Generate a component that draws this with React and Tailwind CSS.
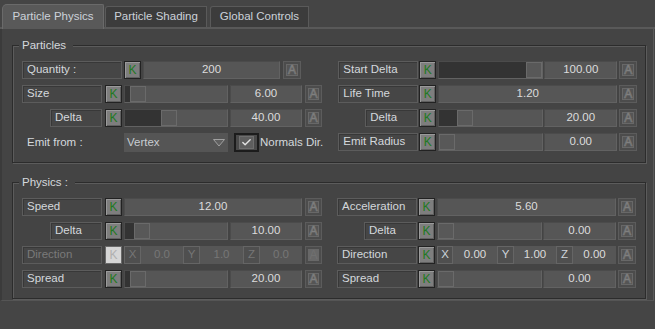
import React from 'react';
import { Check } from 'lucide-react';

// column metrics for the two halves of a group box
const LEFT = {
    g1: 'ml-[3px]', g2: 'ml-[2px]', g3: 'ml-[2px]', g4: 'ml-[3px]',
    slider: 'w-[104px]', value: 'w-[72px]', full: 'w-[178px]', a: 'w-[17px]',
    indent: 'ml-[28px] w-[52px]',
    xyz: ['w-[17px]', 'w-[42px]', 'w-[17px]', 'w-[43px]', 'w-[17px]', 'w-[42px]'],
};
const RIGHT = {
    g1: 'ml-[1px]', g2: 'ml-[2px]', g3: 'ml-[1px]', g4: 'ml-[2px]',
    slider: 'w-[105px]', value: 'w-[73px]', full: 'w-[179px]', a: 'w-[18px]',
    indent: 'ml-[27px] w-[53px]',
    xyz: ['w-[16px]', 'w-[44px]', 'w-[17px]', 'w-[42px]', 'w-[17px]', 'w-[43px]'],
};

const field = 'h-full flex items-center justify-center bg-[#565656] border border-[#4b4b4b] border-r-[#626262] border-b-[#626262] text-[#dcdcdc]';

const KBtn = ({ className = '', disabled }) => (
    <div
        className={`${className} w-[17px] h-full flex items-center justify-center border ${
            disabled
                ? 'border-[#6a6a6a] bg-[#d6d6d6] text-[#b0b0b0]'
                : 'border-[#222] bg-[#7e7e7e] shadow-[inset_1px_1px_0_#9a9a9a,inset_-1px_-1px_0_#606060] text-[#1f7a1f]'
        } text-[12px] leading-none`}
    >
        K
    </div>
);

const ABtn = ({ className = '', w, disabled }) => (
    <div className={`${className} ${w} h-full p-[2px] border border-[#5c5c5c] bg-[#4c4c4c]`}>
        <div
            className={`w-full h-full flex items-center justify-center border border-[#686868] ${
                disabled ? 'bg-[#686868] text-[#707070]' : 'bg-[#555] text-[#555] [-webkit-text-stroke:0.7px_#808080]'
            } text-[12px] leading-none`}
        >
            A
        </div>
    </div>
);

const Label = ({ text, w, disabled }) => (
    <div
        className={`${w} h-full flex items-center pl-[4px] bg-[#464646] border border-[#5c5c5c] shadow-[inset_1px_1px_0_#383838] ${
            disabled ? 'text-[#7a7a7a]' : 'text-[#d4d8dc]'
        }`}
    >
        {text}
    </div>
);

const Slider = ({ s, dark, value }) => (
    <>
        <div className={`${s.g2} ${s.slider} h-full flex bg-[#565656] border border-[#4b4b4b] border-r-[#626262] border-b-[#626262]`}>
            <div className="h-full bg-[#333]" style={{ width: dark }} />
            <div className="w-[16px] h-full border border-[#6a6a6a] bg-[#585858]" />
        </div>
        <div className={`${s.g3} ${s.value} ${field}`}>{value}</div>
    </>
);

const Row = ({ s, label, indent, disabled, children }) => (
    <div className="flex h-[18px]">
        <Label text={label} w={indent ? s.indent : 'w-[80px]'} disabled={disabled} />
        <KBtn className={s.g1} disabled={disabled} />
        {children}
        <ABtn className={s.g4} w={s.a} disabled={disabled} />
    </div>
);

const Xyz = ({ s, values, disabled }) => {
    const box = `h-full flex items-center justify-center bg-[#4f4f4f] border border-[#656565] ${disabled ? 'text-[#767676]' : 'text-[#cdd3da]'}`;
    const val = `h-full flex items-center justify-center bg-[#565656] ${disabled ? 'text-[#767676]' : 'text-[#dcdcdc]'}`;
    return (
        <div className={`${s.g2} ${s.full} h-full flex`}>
            <div className={`${s.xyz[0]} ${box}`}>X</div>
            <div className={`${s.xyz[1]} ${val}`}>{values[0]}</div>
            <div className={`${s.xyz[2]} ${box}`}>Y</div>
            <div className={`${s.xyz[3]} ${val}`}>{values[1]}</div>
            <div className={`${s.xyz[4]} ${box}`}>Z</div>
            <div className={`${s.xyz[5]} ${val}`}>{values[2]}</div>
        </div>
    );
};

const Group = ({ title, titleW, className = '', children }) => (
    <div className={`${className} relative w-[634px] border border-[#2c2c2c] shadow-[inset_1px_1px_0_#5c5c5c,1px_1px_0_#5c5c5c] pt-[15px] pb-[10px] pl-[9px]`}>
        <span className={`absolute -top-[8px] left-[6px] ${titleW} px-[3px] leading-[14px] bg-[#444] text-[#d4d8dc]`}>{title}</span>
        <div className="flex gap-[15px]">{children}</div>
    </div>
);

const Tab = ({ children, active, w, className = '' }) => (
    <div
        className={`${className} ${w} flex items-center justify-center text-[#ccd2d9] ${
            active
                ? 'h-[25px] bg-[#595959] border-t border-l border-r border-[#6a6a6a] rounded-tl-[5px] rounded-tr-[2px]'
                : 'h-[21px] mb-[2px] bg-[#3c3c3c] border-t border-l border-r border-[#5a5a5a] rounded-tl-[3px]'
        }`}
    >
        {children}
    </div>
);

export default function App() {
    return (
        <div className="w-[655px] h-[329px] overflow-hidden bg-[#454545] font-['Liberation_Sans',Arial,sans-serif] text-[11.5px] text-[#d4d8dc]">
            {/* Tabs */}
            <div className="flex items-end h-[29px] pl-[2px] bg-[linear-gradient(to_top,#595959_2px,transparent_2px)]">
                <Tab active w="w-[102px]">Particle Physics</Tab>
                <Tab w="w-[102px]" className="ml-[1px]">Particle Shading</Tab>
                <Tab w="w-[99px]" className="ml-[3px]">Global Controls</Tab>
            </div>

            {/* Rollout panel */}
            <div className="w-[654px] h-[272px] bg-[#444] border-l-[2px] border-l-[#3b3b3b] border-r border-r-[#5a5a5a] border-b border-b-[#555] pl-[10px] pt-[16px]">
                <Group title="Particles" titleW="w-[54px]">
                    <div className="flex flex-col gap-[6px]">
                        <div className="flex h-[18px]">
                            <Label text="Quantity :" w="w-[100px]" />
                            <KBtn className="ml-[2px]" />
                            <div className={`ml-[2px] w-[137px] ${field}`}>200</div>
                            <ABtn className="ml-[3px]" w="w-[18px]" />
                        </div>
                        <Row s={LEFT} label="Size">
                            <Slider s={LEFT} dark={5} value="6.00" />
                        </Row>
                        <Row s={LEFT} label="Delta" indent>
                            <Slider s={LEFT} dark={36} value="40.00" />
                        </Row>
                        <div className="flex items-center h-[19px]">
                            <span className="w-[102px] pl-[5px] text-[#d4d8dc]">Emit from :</span>
                            <div className="w-[104px] h-full flex items-center justify-between pl-[3px] pr-[3px] bg-[#555] text-[#c8cdd2]">
                                <span>Vertex</span>
                                <svg width="12" height="8" viewBox="0 0 12 8">
                                    <polygon points="0.5,0.5 11.5,0.5 6,7" fill="#5f5f5f" stroke="#a0a0a0" strokeWidth="1" />
                                </svg>
                            </div>
                            <div className="ml-[6px] w-[25px] h-full flex items-center justify-center border-2 border-[#1c1c1c] bg-[#4a4a4a]">
                                <div className="w-[15px] h-[13px] flex items-center justify-center bg-[#5e5e5e] border border-[#6e6e6e]">
                                    <Check size={11} strokeWidth={3} color="#e2e2e2" />
                                </div>
                            </div>
                            <span className="ml-[1px] text-[#d4d8dc]">Normals Dir.</span>
                        </div>
                    </div>
                    <div className="flex flex-col gap-[6px]">
                        <Row s={RIGHT} label="Start Delta">
                            <Slider s={RIGHT} dark={88} value="100.00" />
                        </Row>
                        <Row s={RIGHT} label="Life Time">
                            <div className={`${RIGHT.g2} ${RIGHT.full} ${field}`}>1.20</div>
                        </Row>
                        <Row s={RIGHT} label="Delta" indent>
                            <Slider s={RIGHT} dark={18} value="20.00" />
                        </Row>
                        <Row s={RIGHT} label="Emit Radius">
                            <Slider s={RIGHT} dark={0} value="0.00" />
                        </Row>
                    </div>
                </Group>

                <Group title="Physics :" titleW="w-[56px]" className="mt-[19px]">
                    <div className="flex flex-col gap-[6px]">
                        <Row s={LEFT} label="Speed">
                            <div className={`${LEFT.g2} ${LEFT.full} ${field}`}>12.00</div>
                        </Row>
                        <Row s={LEFT} label="Delta" indent>
                            <Slider s={LEFT} dark={9} value="10.00" />
                        </Row>
                        <Row s={LEFT} label="Direction" disabled>
                            <Xyz s={LEFT} values={['0.0', '1.0', '0.0']} disabled />
                        </Row>
                        <Row s={LEFT} label="Spread">
                            <Slider s={LEFT} dark={5} value="20.00" />
                        </Row>
                    </div>
                    <div className="flex flex-col gap-[6px]">
                        <Row s={RIGHT} label="Acceleration">
                            <div className={`${RIGHT.g2} ${RIGHT.full} ${field}`}>5.60</div>
                        </Row>
                        <Row s={RIGHT} label="Delta" indent>
                            <Slider s={RIGHT} dark={0} value="0.00" />
                        </Row>
                        <Row s={RIGHT} label="Direction">
                            <Xyz s={RIGHT} values={['0.00', '1.00', '0.00']} />
                        </Row>
                        <Row s={RIGHT} label="Spread">
                            <Slider s={RIGHT} dark={0} value="0.00" />
                        </Row>
                    </div>
                </Group>
            </div>
        </div>
    );
}
